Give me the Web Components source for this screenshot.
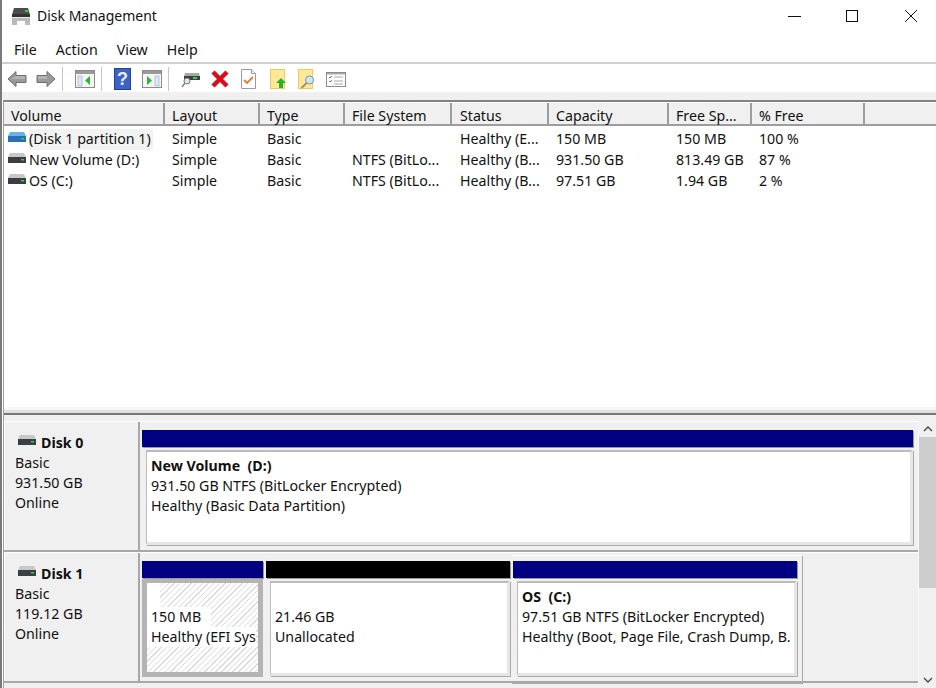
<!DOCTYPE html>
<html><head><meta charset="utf-8"><style>
html,body{margin:0;padding:0;background:#fff}
body{width:936px;height:688px;overflow:hidden;font:14.2px "Noto Sans","Open Sans",sans-serif;color:#111}
</style></head><body>
<dm-window></dm-window>
<template id="t-window"><style>
:host{display:flex;flex-direction:column;width:936px;height:688px;box-sizing:border-box;border-left:2px solid #7a7a7a;overflow:hidden;background:#fff}
.mid{height:8px;background:#f0f0f0;flex:none}
.frame{flex:1;min-height:0;display:flex;flex-direction:column;border-top:2px solid #828282;border-left:1px solid #a0a0a0;margin-left:1px}
.split{flex:none;background:linear-gradient(#f6f6f6 0 3px,#e0e0e0 3px);border-bottom:2px solid #777;box-sizing:border-box;height:8px}
</style>
<dm-title></dm-title><dm-menu></dm-menu><dm-toolbar></dm-toolbar><div class="mid"></div>
<div class="frame"><dm-list></dm-list><div class="split"></div><dm-disks></dm-disks></div>
</template>
<template id="t-title"><style>
:host{display:flex;align-items:center;height:35px;flex:none;background:#fff;font-size:14px;color:#111}
svg{flex:none;display:block}
.ico{margin:0 6px 0 9px;display:flex;position:relative;top:-1px}
.t{flex:1;position:relative;top:-2px}
.b{width:58px;height:32px;display:flex;align-items:center;justify-content:center;margin-top:-4px}
</style>
<span class="ico"><svg width="20" height="18" viewBox="0 0 20 18"><path d="M3 0h14l2 7H1z" fill="#4c4c4c"/><path d="M1 6h18v3H1z" fill="#333"/><path d="M1 9h18v8h-5v-4H6v4H1z" fill="#b9b9b9"/><rect x="14" y="2" width="3" height="2" fill="#35d335"/><path d="M1 9h18v1H1z" fill="#e8e8e8"/></svg></span>
<span class="t">Disk Management</span>
<span class="b"><svg width="14" height="14" viewBox="0 0 14 14"><path d="M1 7.500h13" stroke="#111" fill="none"/></svg></span>
<span class="b" style="margin-right:5px"><svg width="14" height="14" viewBox="0 0 14 14"><rect x="1.500" y="1.500" width="11" height="11" stroke="#111" fill="none"/></svg></span>
<span class="b" style="width:50px"><svg width="14" height="14" viewBox="0 0 14 14"><path d="M1 1l12 12M13 1L1 13" stroke="#111" fill="none"/></svg></span>
</template>
<template id="t-menu"><style>
:host{display:flex;height:29px;flex:none;box-sizing:border-box;padding:1px 0 0 12px;align-items:center;gap:19px;border-bottom:2px solid #d0d0d0;background:#fff;font-size:14.2px}
</style><span>File</span><span>Action</span><span>View</span><span>Help</span></template>
<template id="t-toolbar"><style>
:host{display:flex;height:28px;flex:none;align-items:center;background:#fff;padding:2px 0 0 5px;box-sizing:border-box}
svg{display:block;flex:none}
.s{width:1px;height:24px;background:#c4c4c4;flex:none}
</style>
<svg style="margin-right:9px" width="20" height="18" viewBox="0 0 20 18"><path d="M1 9l8-7.500v4h10v7H9v4z" fill="#9a9a9a" stroke="#6e6e6e"/><path d="M9 6h9v3H4z" fill="#b4b4b4"/></svg>
<svg style="margin-right:6px" width="20" height="18" viewBox="0 0 20 18"><path d="M19 9l-8-7.500v4H1v7h10v4z" fill="#9a9a9a" stroke="#6e6e6e"/><path d="M2 6h9v3H2z" fill="#b4b4b4"/></svg>
<span class="s"></span>
<svg style="margin:0 6px 0 12px" width="20" height="18" viewBox="0 0 20 18"><rect x=".5" y=".5" width="19" height="17" fill="#f6f6f6" stroke="#8c8c8c"/><rect x="1" y="1" width="18" height="3" fill="#9a9a9a"/><rect x="3" y="6" width="4" height="10" fill="#dce8f5" stroke="#7a9cc0" stroke-width=".5"/><path d="M15 6v9l-5-4.500z" fill="#2fb52f"/></svg>
<span class="s"></span>
<svg style="margin:0 0 0 12px" width="17" height="22" viewBox="0 0 17 22"><rect width="17" height="22" fill="#22409c"/><rect x="1" y="1" width="15" height="20" fill="#3d62c4"/><text x="8.500" y="17" font-family="Liberation Sans" font-weight="bold" font-size="18" fill="#e8eefc" text-anchor="middle">?</text></svg>
<svg style="margin:0 0 0 11px" width="20" height="18" viewBox="0 0 20 18"><rect x=".5" y=".5" width="19" height="17" fill="#f6f6f6" stroke="#8c8c8c"/><rect x="1" y="1" width="18" height="3" fill="#9a9a9a"/><rect x="13" y="6" width="4" height="10" fill="#dce8f5" stroke="#7a9cc0" stroke-width=".5"/><path d="M5 6v9l5-4.500z" fill="#2fb52f"/></svg>
<span class="s" style="margin-left:6px"></span>
<svg style="margin:0 0 0 12px" width="19" height="18" viewBox="0 0 19 18"><path d="M4 3h14l1 4H3z" fill="#a8a8a8"/><path d="M3 6h16v4H3z" fill="#3a4048"/><rect x="12" y="7" width="4" height="2" fill="#35d335"/><circle cx="6" cy="11" r="3" fill="#dbe9f5" stroke="#777"/><path d="M4 13L1 17" stroke="#888" stroke-width="1.500"/></svg>
<svg style="margin:0 0 0 11px" width="18" height="18" viewBox="0 0 18 18"><path d="M2 2l14 14M16 2L2 16" stroke="#d3121c" stroke-width="4.500"/></svg>
<svg style="margin:0 0 0 12px" width="15" height="20" viewBox="0 0 15 20"><path d="M.5.500h10l4 4v15H.5z" fill="#fff" stroke="#9a9a9a"/><path d="M10.500.500v4h4" fill="#eee" stroke="#9a9a9a"/><path d="M3 11l3 3 6-6" fill="none" stroke="#e8793c" stroke-width="1.800"/></svg>
<svg style="margin:0 0 0 14px" width="16" height="20" viewBox="0 0 16 20"><rect x=".5" y=".5" width="14" height="19" fill="#ffe89a" stroke="#f2ca5c"/><path d="M11 9l5 5h-3v5H9v-5H6z" fill="#23b323"/></svg>
<svg style="margin:0 0 0 12px" width="18" height="20" viewBox="0 0 18 20"><rect x=".5" y=".5" width="14" height="19" fill="#ffe89a" stroke="#f2ca5c"/><circle cx="11.500" cy="11" r="4" fill="#cfe6f5" stroke="#7a94a8"/><path d="M8.500 14l-5 5" stroke="#a09060" stroke-width="1.800"/></svg>
<svg style="margin:0 0 0 10px" width="20" height="15" viewBox="0 0 20 15"><rect x=".5" y=".5" width="19" height="14" fill="#fff" stroke="#8c8c8c"/><rect x="1" y="1" width="18" height="1.500" fill="#aaa"/><path d="M3 5l1 1 2-2M3 9l1 1 2-2" stroke="#3a87d8" fill="none"/><path d="M8 5h9M8 9h9M8 12h9" stroke="#aaa"/></svg>
</template>
<template id="t-list"><style>
:host{display:block;height:305px;flex:none;background:#fff;overflow:hidden;font-size:14.2px}
.h,.r{display:grid;grid-template-columns:161px 95px 85px 107px 97px 120px 83px 113px 1fr}
.h{height:24px;box-sizing:border-box;background:#f0f0f0;border-bottom:2px solid #9d9d9d;border-top:1px solid #fff}
.h span{padding:3px 0 0 7px;border-right:2px solid #9d9d9d;line-height:20px;white-space:nowrap}
.h span:nth-child(5){padding-left:8px}
.h span:last-child{border-right:0}
.rows{padding-top:3px}
.r{height:21px;line-height:20px}
.r span{padding-left:7px;white-space:nowrap}
.r span:nth-child(5){padding-left:8px}
.r span:first-child{padding-left:4px;display:flex;align-items:center;gap:3px}
em{font-style:normal;padding:0 2px 0 0;background:var(--s,transparent);height:21px;line-height:20px}
svg{flex:none;position:relative;top:-3px}
</style>
<div class="h"><span>Volume</span><span>Layout</span><span>Type</span><span>File System</span><span>Status</span><span>Capacity</span><span>Free Sp...</span><span>% Free</span><span></span></div>
<div class="rows">
<div class="r"><span><svg width="18" height="10" viewBox="0 0 18 10"><path d="M2 0h14l2 4v6H0V4z" fill="#67b2e6"/><rect y="4" width="18" height="6" fill="#2b6fb5"/><rect x="13" y="6" width="3" height="1.500" fill="#35d335"/></svg><em style="--s:#f2f2f2">(Disk 1 partition 1)</em></span><span>Simple</span><span>Basic</span><span></span><span>Healthy (E...</span><span>150 MB</span><span>150 MB</span><span>100 %</span><span></span></div>
<div class="r"><span><svg width="18" height="10" viewBox="0 0 18 10"><path d="M2 0h14l2 4v6H0V4z" fill="#c8c8c8"/><rect y="4" width="18" height="6" fill="#3b3f45"/><rect x="13" y="6" width="3" height="1.500" fill="#35d335"/></svg><em>New Volume (D:)</em></span><span>Simple</span><span>Basic</span><span>NTFS (BitLo...</span><span>Healthy (B...</span><span>931.50 GB</span><span>813.49 GB</span><span>87 %</span><span></span></div>
<div class="r"><span><svg width="18" height="10" viewBox="0 0 18 10"><path d="M2 0h14l2 4v6H0V4z" fill="#c8c8c8"/><rect y="4" width="18" height="6" fill="#3b3f45"/><rect x="13" y="6" width="3" height="1.500" fill="#35d335"/></svg><em>OS (C:)</em></span><span>Simple</span><span>Basic</span><span>NTFS (BitLo...</span><span>Healthy (B...</span><span>97.51 GB</span><span>1.94 GB</span><span>2 %</span><span></span></div>
</div></template>
<template id="t-disks"><style>
:host{flex:1;min-height:0;display:flex;background:#f0f0f0;overflow:hidden}
.rows{flex:1;min-width:0;padding-top:6px;display:flex;flex-direction:column}
.sb{width:18px;flex:none;background:#f0f0f0;border-left:1px solid #fafafa;box-sizing:border-box;display:flex;flex-direction:column;align-items:center;margin-top:6px}
.sb svg{flex:none;margin:5px 0}
.th{align-self:stretch;height:151px;background:#cdcdcd;flex:none}
.sp{flex:1}
.w{display:block;background:#fff;margin-left:-1px;padding-left:5px;line-height:20px;height:20px}
</style>
<div class="rows">
<dm-disk name="Disk 0" size="931.50 GB" style="height:131px">
<dm-part style="width:771px" color="#000080"><b>New Volume&nbsp; (D:)</b><br>931.50 GB NTFS (BitLocker Encrypted)<br>Healthy (Basic Data Partition)</dm-part>
</dm-disk>
<dm-disk name="Disk 1" size="119.12 GB" style="height:131px">
<dm-part style="width:121px" color="#000080" hatch><span class="w" style="width:9px;height:24px"></span><span class="w" style="width:60px">150 MB</span><span class="w" style="width:105px">Healthy (EFI Sys</span></dm-part>
<dm-part style="width:244px" color="#000" frame><br>21.46 GB<br>Unallocated</dm-part>
<dm-part style="width:284px" color="#000080" frame last><b>OS&nbsp; (C:)</b><br>97.51 GB NTFS (BitLocker Encrypted)<br>Healthy (Boot, Page File, Crash Dump, B.</dm-part>
</dm-disk></div>
<div class="sb"><svg width="10" height="6" viewBox="0 0 10 6"><path d="M1 5l4-4 4 4" stroke="#444" stroke-width="1.300" fill="none"/></svg><div class="th"></div><div class="sp"></div><svg width="10" height="6" viewBox="0 0 10 6"><path d="M1 1l4 4 4-4" stroke="#444" stroke-width="1.300" fill="none"/></svg></div>
</template>
<template id="t-disk"><style>
:host{display:flex;flex:none;box-sizing:border-box;border-bottom:2px solid #a8a8a8;border-top:1px solid #fff}
.l{width:136px;flex:none;box-sizing:border-box;padding:10px 0 0 10px;line-height:20px;border-right:2px solid #a8a8a8;border-left:1px solid #fff;font-size:14.2px}
.n{font-weight:700;display:flex;align-items:center;gap:5px;padding:1px 0 0 3px}
svg{position:relative;top:-3px}
.p{flex:1;min-width:0;display:flex;gap:3px;padding:8px 0 0 2px;background:#f0f0f0;box-sizing:border-box}
</style>
<div class="l"><div class="n"><svg width="18" height="10" viewBox="0 0 18 10"><path d="M2 0h14l2 4v6H0V4z" fill="#c8c8c8"/><rect y="4" width="18" height="6" fill="#3b3f45"/><rect x="13" y="6" width="3" height="1.500" fill="#35d335"/></svg><span id="n"></span></div><div>Basic</div><div id="s"></div><div>Online</div></div>
<div class="p"><slot></slot></div>
</template>
<template id="t-part"><style>
:host{display:block;flex:none;height:118px;box-sizing:border-box;font-size:14.2px;position:relative}
.bar{height:17px;box-shadow:1px 1px 0 #999}
.outer{height:95px;box-sizing:border-box;background:#fff;margin:3px 0 0 4px;border-left:1px solid #bbb;border-top:2px solid #bbb;border-right:3px solid #e6e6e6;border-bottom:3px solid #e6e6e6;box-shadow:1px 1px 0 #aaa;padding:4px 0 0 4px;line-height:20px;white-space:nowrap}
.c{overflow:hidden}
:host([hatch]) .outer{margin:1px 0 0;height:98px;border:4px solid #b4b4b4;border-width:4px 5px 5px;box-shadow:none;padding:0;background:repeating-linear-gradient(135deg,#fff 0 3px,#dcdcdc 3px 4px)}
:host([hatch]) .c{margin:0}
:host([last]) .c{margin-right:4px}
/* raised outline of a partition: lies over the row, does not take part in its flow */
:host([last])::after{content:"";position:absolute;left:-1px;top:-6px;right:-6px;height:127px;border-top:1px solid #fff;border-right:1px solid #aaa;border-bottom:1px solid #aaa}
b{font-weight:700}
</style>
<div class="bar" id="b"></div><div class="outer"><div class="c"><slot></slot></div></div>
</template>
<script>
const def=(name,tid,extra)=>customElements.define(name,class extends HTMLElement{
 constructor(){super();const r=this.attachShadow({mode:"open"});r.appendChild(document.getElementById(tid).content.cloneNode(true));}
 connectedCallback(){extra&&extra(this)}
});
def("dm-title","t-title");def("dm-menu","t-menu");def("dm-toolbar","t-toolbar");def("dm-list","t-list");
def("dm-disks","t-disks");
def("dm-disk","t-disk",e=>{e.shadowRoot.getElementById("n").textContent=e.getAttribute("name");e.shadowRoot.getElementById("s").textContent=e.getAttribute("size")});
def("dm-part","t-part",e=>{e.shadowRoot.getElementById("b").style.background=e.getAttribute("color")});
def("dm-window","t-window");
</script></body></html>
